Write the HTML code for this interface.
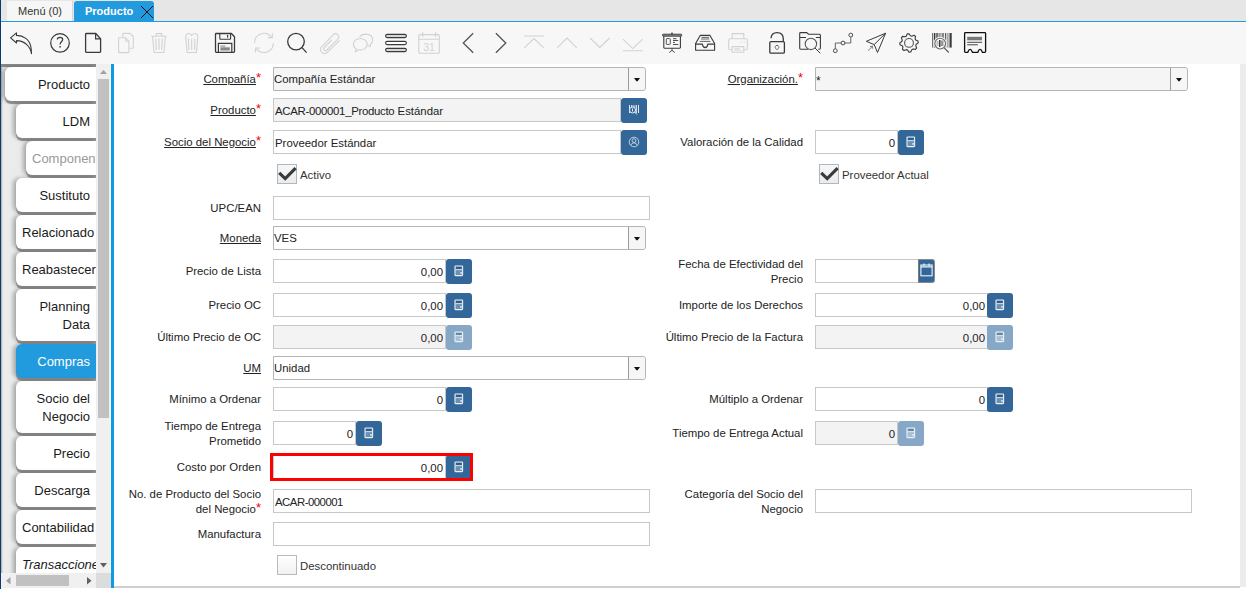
<!DOCTYPE html>
<html><head><meta charset="utf-8"><style>
*{box-sizing:border-box;margin:0;padding:0}
html,body{width:1246px;height:589px;overflow:hidden;background:#fff;font-family:"Liberation Sans",sans-serif;color:#333}
.a{position:absolute}
#tabstrip{left:0;top:0;width:1246px;height:21px;background:#e6e6e6}
#bline{left:0;top:21px;width:1246px;height:1px;background:#229ade}
#tb{left:0;top:22px;width:1246px;height:42px;background:#f7f7f7}
#lborder{left:0;top:0;width:1px;height:589px;background:#0d3a6e}
.lbl{font-size:11.4px;color:#222;text-align:right;white-space:nowrap;line-height:24px;height:24px}
.lbl2{font-size:11.4px;color:#222;text-align:right;line-height:15px}
.u{text-decoration:underline}
.req{color:#f00;font-size:13px;position:relative;top:-1px;line-height:0}
.fld{background:#fff;border:1px solid #c8c8c8;height:24px;font-size:11.4px;line-height:24px;padding:0 0 0 1px;color:#222;white-space:nowrap;overflow:hidden}
.ro{background:#f3f3f3}
.num{text-align:right;padding-right:2px}
.btn{background:#336699;border-radius:3px;height:25px;width:26px}
.btnd{background:#86a8c6}
.cmb{border:1px solid #b4b4b4;border-radius:0 3px 3px 0;height:24px}
.cmbb{border-left:1px solid #9a9a9a;width:17px;height:22px;top:0;background:#f6f6f6;border-radius:0 3px 3px 0}
.chk{width:20px;height:20px;border:1px solid #a9b9c8;background:linear-gradient(#f7f7f7,#ebebeb)}
.tab{background:#fff;border-radius:6px 0 0 6px;font-size:13px;color:#1a1a1a;text-align:right;padding-left:6px;padding-right:6px;box-shadow:0 3px 1px #8a8a8a,-3px 0 4px rgba(0,0,0,.28);overflow:hidden;white-space:nowrap}
</style></head><body>

<div id="tabstrip" class="a"></div>
<div class="a" style="left:7px;top:1px;width:66px;height:20px;background:#f6f6f6;border-right:1px solid #d6d6d6"></div>
<div class="a" style="left:18px;top:1px;height:20px;line-height:21px;font-size:11px;color:#333">Menú (0)</div>
<div class="a" style="left:74px;top:1px;width:80px;height:21px;background:#229ade;border-radius:3px 3px 0 0"></div>
<div class="a" style="left:85px;top:1px;height:20px;line-height:21px;font-size:11px;color:#fff;font-weight:bold">Producto</div>
<svg class="a" style="left:140px;top:5px" width="14" height="14" viewBox="0 0 14 14"><path d="M1 1L13 13M13 1L1 13" stroke="#111" stroke-width="1"/></svg>
<div id="bline" class="a"></div>
<div id="tb" class="a"></div>
<div class="a" style="left:0;top:64px;width:1246px;height:525px;background:#fff"></div>
<div class="a" style="left:114px;top:586px;width:1126px;height:2px;background:#cfcfcf"></div>
<div class="a" style="left:1240px;top:64px;width:6px;height:523px;background:#ececec"></div>
<div class="a" style="left:1px;top:64px;width:95px;height:509px;background:linear-gradient(to right,#a8a8a8 0,#ececec 2px,#e4e4e4 100%);overflow:hidden" id="tabpanel">
<div class="a" style="left:0;top:0;width:95px;height:3px;background:#8a8a8a"></div>
<div class="a tab" style="left:4px;top:3px;height:34px;width:91px;background:#fff;color:#1a1a1a;line-height:34px;padding-top:1px;">Producto</div>
<div class="a tab" style="left:15px;top:40px;height:34px;width:80px;background:#fff;color:#1a1a1a;line-height:34px;padding-top:1px;">LDM</div>
<div class="a tab" style="left:25px;top:77px;height:34px;width:70px;background:#fff;color:#999;line-height:34px;padding-top:1px;">Componentes</div>
<div class="a tab" style="left:15px;top:114px;height:34px;width:80px;background:#fff;color:#1a1a1a;line-height:34px;padding-top:1px;">Sustituto</div>
<div class="a tab" style="left:15px;top:151px;height:34px;width:80px;background:#fff;color:#1a1a1a;line-height:34px;padding-top:1px;">Relacionado</div>
<div class="a tab" style="left:15px;top:188px;height:34px;width:80px;background:#fff;color:#1a1a1a;line-height:34px;padding-top:1px;">Reabastecer</div>
<div class="a tab" style="left:15px;top:225px;height:52px;width:80px;background:#fff;color:#1a1a1a;line-height:18px;padding-top:9px;">Planning<br>Data</div>
<div class="a tab" style="left:15px;top:280px;height:34px;width:80px;background:#229ade;color:#fff;line-height:34px;padding-top:1px;">Compras</div>
<div class="a tab" style="left:15px;top:317px;height:52px;width:80px;background:#fff;color:#1a1a1a;line-height:18px;padding-top:9px;">Socio del<br>Negocio</div>
<div class="a tab" style="left:15px;top:372px;height:34px;width:80px;background:#fff;color:#1a1a1a;line-height:34px;padding-top:1px;">Precio</div>
<div class="a tab" style="left:15px;top:409px;height:34px;width:80px;background:#fff;color:#1a1a1a;line-height:34px;padding-top:1px;">Descarga</div>
<div class="a tab" style="left:15px;top:446px;height:34px;width:80px;background:#fff;color:#1a1a1a;line-height:34px;padding-top:1px;">Contabilidad</div>
<div class="a tab" style="left:15px;top:483px;height:34px;width:80px;background:#fff;color:#1a1a1a;line-height:34px;padding-top:1px;font-style:italic;">Transacciones</div>
</div>
<div class="a" style="left:96px;top:64px;width:14px;height:509px;background:#f0f0f0"></div>
<div class="a" style="left:98px;top:79px;width:11px;height:339px;background:#c1c1c1"></div>
<svg class="a" style="left:100px;top:70px" width="7" height="4"><path d="M0 4L3.5 0L7 4Z" fill="#a0a0a0"/></svg>
<svg class="a" style="left:100px;top:563px" width="7" height="4.5"><path d="M0 0L3.5 4.5L7 0Z" fill="#606060"/></svg>
<div class="a" style="left:1px;top:573px;width:95px;height:15px;background:#f0f0f0"></div>
<div class="a" style="left:16px;top:575px;width:53px;height:11px;background:#c1c1c1"></div>
<svg class="a" style="left:6px;top:577px" width="4.5" height="7.5"><path d="M4.5 0L0 3.75L4.5 7.5Z" fill="#a0a0a0"/></svg>
<svg class="a" style="left:87px;top:577px" width="4.5" height="7.5"><path d="M0 0L4.5 3.75L0 7.5Z" fill="#606060"/></svg>
<div class="a" style="left:96px;top:573px;width:15px;height:15px;background:#dcdcdc"></div>
<div class="a" style="left:111px;top:64px;width:3px;height:524px;background:#0d9ae0"></div>
<div id="lborder" class="a"></div>
<div class="a lbl" style="right:985px;top:67px"><span class="u">Compañía</span><span class="req">*</span></div>
<div class="a cmb" style="left:273px;top:67px;width:373px;background:#f5f5f5"><div class="a" style="left:0px;top:0;line-height:23px;font-size:11.4px;color:#222">Compañía Estándar</div><div class="a cmbb" style="right:0"></div><svg class="a" style="right:5px;top:10px" width="6" height="3.5" viewBox="0 0 6 3.5"><path d="M0 0H6L3.6 3.3H2.4Z" fill="#111"/></svg></div>
<div class="a lbl" style="right:443px;top:67px"><span class="u">Organización.</span><span class="req">*</span></div>
<div class="a cmb" style="left:815px;top:67px;width:373px;background:#f5f5f5"><div class="a" style="left:0px;top:0;line-height:23px;font-size:11.4px;color:#222"><span style="position:relative;top:2px;font-size:12px">*</span></div><div class="a cmbb" style="right:0"></div><svg class="a" style="right:5px;top:10px" width="6" height="3.5" viewBox="0 0 6 3.5"><path d="M0 0H6L3.6 3.3H2.4Z" fill="#111"/></svg></div>
<div class="a lbl" style="right:985px;top:98px"><span class="u">Producto</span><span class="req">*</span></div>
<div class="a fld ro" style="left:273px;top:98px;width:348px;height:24px"><span style='letter-spacing:-0.3px'>ACAR-000001_Producto</span> Estándar</div>
<div class="a btn" style="left:621px;top:98px;width:26px"></div>
<svg class="a" style="left:628px;top:104px" width="12" height="12" viewBox="0 0 12 12"><rect x="1" y="1" width="1" height="8" fill="#e0e8f0"/><rect x="3" y="1" width="1.5" height="8" fill="#c8d4e0"/><rect x="5.5" y="1" width="1" height="8" fill="#e0e8f0"/><rect x="7.5" y="1" width="1.5" height="8" fill="#c8d4e0"/><rect x="10" y="1" width="1" height="8" fill="#e0e8f0"/><circle cx="4.5" cy="6" r="3" fill="#336699" stroke="#e8eef4" stroke-width="1"/><path d="M6.6 8.1L9 10.6" stroke="#e8eef4" stroke-width="1"/><rect x="4" y="4.5" width="1" height="3" fill="#e8eef4"/></svg>
<div class="a lbl" style="right:985px;top:130px"><span class="u">Socio del Negocio</span><span class="req">*</span></div>
<div class="a fld" style="left:273px;top:130px;width:348px;height:24px">Proveedor Estándar</div>
<div class="a btn" style="left:621px;top:130px;width:26px"></div>
<svg class="a" style="left:628px;top:136px" width="12" height="12" viewBox="0 0 12 12"><circle cx="6" cy="6" r="4.8" fill="none" stroke="#c9d6e3" stroke-width="0.9"/><circle cx="6" cy="4.6" r="1.9" fill="none" stroke="#c9d6e3" stroke-width="0.9"/><path d="M2.8 9.4Q3.5 6.8 6 6.8Q8.5 6.8 9.2 9.4" fill="none" stroke="#c9d6e3" stroke-width="0.9"/></svg>
<div class="a lbl" style="right:443px;top:130px">Valoración de la Calidad</div>
<div class="a fld num" style="left:815px;top:130px;width:83px;height:24px">0</div>
<div class="a btn" style="left:898px;top:130px;width:26px"></div>
<svg class="a" style="left:906px;top:136px" width="10" height="12" viewBox="0 0 10 12"><rect x="1" y="1" width="7.6" height="9.6" rx="0.6" fill="rgba(255,255,255,.28)" stroke="#e9eff5" stroke-width="1.1"/><rect x="1.9" y="1.9" width="5.8" height="2" fill="#2b5b8b"/><rect x="1.6" y="4.3" width="6.4" height="0.8" fill="#e9eff5"/><rect x="6.4" y="7" width="1.3" height="1.8" fill="#f4f7fa"/></svg>
<div class="a chk" style="left:277px;top:164px;"></div>
<svg class="a" style="left:277px;top:164px" width="20" height="20" viewBox="0 0 20 20"><path d="M2.2 8.9L8.2 14.6L18.6 4.1" fill="none" stroke="#3a3a3a" stroke-width="3.1"/></svg>
<div class="a" style="left:300px;top:165px;line-height:21px;font-size:11.4px;color:#333">Activo</div>
<div class="a chk" style="left:819px;top:164px;"></div>
<svg class="a" style="left:819px;top:164px" width="20" height="20" viewBox="0 0 20 20"><path d="M2.2 8.9L8.2 14.6L18.6 4.1" fill="none" stroke="#3a3a3a" stroke-width="3.1"/></svg>
<div class="a" style="left:842px;top:165px;line-height:21px;font-size:11.4px;color:#333">Proveedor Actual</div>
<div class="a lbl" style="right:985px;top:196px">UPC/EAN</div>
<div class="a fld" style="left:273px;top:196px;width:377px;height:24px"></div>
<div class="a lbl" style="right:985px;top:226px"><span class="u">Moneda</span></div>
<div class="a cmb" style="left:273px;top:226px;width:373px;background:#fff"><div class="a" style="left:0px;top:0;line-height:23px;font-size:11.4px;color:#222">VES</div><div class="a cmbb" style="right:0"></div><svg class="a" style="right:5px;top:10px" width="6" height="3.5" viewBox="0 0 6 3.5"><path d="M0 0H6L3.6 3.3H2.4Z" fill="#111"/></svg></div>
<div class="a lbl" style="right:985px;top:259px">Precio de Lista</div>
<div class="a fld num" style="left:273px;top:259px;width:173px;height:24px">0,00</div>
<div class="a btn" style="left:446px;top:259px;width:26px"></div>
<svg class="a" style="left:454px;top:265px" width="10" height="12" viewBox="0 0 10 12"><rect x="1" y="1" width="7.6" height="9.6" rx="0.6" fill="rgba(255,255,255,.28)" stroke="#e9eff5" stroke-width="1.1"/><rect x="1.9" y="1.9" width="5.8" height="2" fill="#2b5b8b"/><rect x="1.6" y="4.3" width="6.4" height="0.8" fill="#e9eff5"/><rect x="6.4" y="7" width="1.3" height="1.8" fill="#f4f7fa"/></svg>
<div class="a lbl2" style="right:443px;top:257px;width:200px">Fecha de Efectividad del<br>Precio</div>
<div class="a fld" style="left:815px;top:259px;width:104px;height:24px"></div>
<div class="a" style="left:918px;top:259px;width:17px;height:24px;background:#336699;border:1px solid #8a8a8a;border-left:1px solid #7a7a7a;border-radius:0 3px 3px 0"></div>
<svg class="a" style="left:920px;top:263px" width="13" height="14" viewBox="0 0 13 14"><rect x="0.9" y="2" width="11.2" height="10.8" fill="none" stroke="#f0f4f8" stroke-width="1.1"/><path d="M0.9 3.9H12.1M4 0.5V3M9 0.5V3" stroke="#f0f4f8" stroke-width="1.1"/></svg>
<div class="a lbl" style="right:985px;top:293px">Precio OC</div>
<div class="a fld num" style="left:273px;top:293px;width:173px;height:24px">0,00</div>
<div class="a btn" style="left:446px;top:293px;width:26px"></div>
<svg class="a" style="left:454px;top:299px" width="10" height="12" viewBox="0 0 10 12"><rect x="1" y="1" width="7.6" height="9.6" rx="0.6" fill="rgba(255,255,255,.28)" stroke="#e9eff5" stroke-width="1.1"/><rect x="1.9" y="1.9" width="5.8" height="2" fill="#2b5b8b"/><rect x="1.6" y="4.3" width="6.4" height="0.8" fill="#e9eff5"/><rect x="6.4" y="7" width="1.3" height="1.8" fill="#f4f7fa"/></svg>
<div class="a lbl" style="right:443px;top:293px">Importe de los Derechos</div>
<div class="a fld num" style="left:815px;top:293px;width:173px;height:24px">0,00</div>
<div class="a btn" style="left:987px;top:293px;width:26px"></div>
<svg class="a" style="left:995px;top:299px" width="10" height="12" viewBox="0 0 10 12"><rect x="1" y="1" width="7.6" height="9.6" rx="0.6" fill="rgba(255,255,255,.28)" stroke="#e9eff5" stroke-width="1.1"/><rect x="1.9" y="1.9" width="5.8" height="2" fill="#2b5b8b"/><rect x="1.6" y="4.3" width="6.4" height="0.8" fill="#e9eff5"/><rect x="6.4" y="7" width="1.3" height="1.8" fill="#f4f7fa"/></svg>
<div class="a lbl" style="right:985px;top:325px">Último Precio de OC</div>
<div class="a fld ro num" style="left:273px;top:325px;width:173px;height:24px">0,00</div>
<div class="a btn btnd" style="left:446px;top:325px;width:26px"></div>
<svg class="a" style="left:454px;top:331px" width="10" height="12" viewBox="0 0 10 12"><rect x="1" y="1" width="7.6" height="9.6" rx="0.6" fill="rgba(255,255,255,.28)" stroke="#e9eff5" stroke-width="1.1"/><rect x="1.9" y="1.9" width="5.8" height="2" fill="#5d83a8"/><rect x="1.6" y="4.3" width="6.4" height="0.8" fill="#e9eff5"/><rect x="6.4" y="7" width="1.3" height="1.8" fill="#f4f7fa"/></svg>
<div class="a lbl" style="right:443px;top:325px">Último Precio de la Factura</div>
<div class="a fld ro num" style="left:815px;top:325px;width:173px;height:24px">0,00</div>
<div class="a btn btnd" style="left:987px;top:325px;width:26px"></div>
<svg class="a" style="left:995px;top:331px" width="10" height="12" viewBox="0 0 10 12"><rect x="1" y="1" width="7.6" height="9.6" rx="0.6" fill="rgba(255,255,255,.28)" stroke="#e9eff5" stroke-width="1.1"/><rect x="1.9" y="1.9" width="5.8" height="2" fill="#5d83a8"/><rect x="1.6" y="4.3" width="6.4" height="0.8" fill="#e9eff5"/><rect x="6.4" y="7" width="1.3" height="1.8" fill="#f4f7fa"/></svg>
<div class="a lbl" style="right:985px;top:356px"><span class="u">UM</span></div>
<div class="a cmb" style="left:273px;top:356px;width:373px;background:#fff"><div class="a" style="left:0px;top:0;line-height:23px;font-size:11.4px;color:#222">Unidad</div><div class="a cmbb" style="right:0"></div><svg class="a" style="right:5px;top:10px" width="6" height="3.5" viewBox="0 0 6 3.5"><path d="M0 0H6L3.6 3.3H2.4Z" fill="#111"/></svg></div>
<div class="a lbl" style="right:985px;top:387px">Mínimo a Ordenar</div>
<div class="a fld num" style="left:273px;top:387px;width:173px;height:24px">0</div>
<div class="a btn" style="left:446px;top:387px;width:26px"></div>
<svg class="a" style="left:454px;top:393px" width="10" height="12" viewBox="0 0 10 12"><rect x="1" y="1" width="7.6" height="9.6" rx="0.6" fill="rgba(255,255,255,.28)" stroke="#e9eff5" stroke-width="1.1"/><rect x="1.9" y="1.9" width="5.8" height="2" fill="#2b5b8b"/><rect x="1.6" y="4.3" width="6.4" height="0.8" fill="#e9eff5"/><rect x="6.4" y="7" width="1.3" height="1.8" fill="#f4f7fa"/></svg>
<div class="a lbl" style="right:443px;top:387px">Múltiplo a Ordenar</div>
<div class="a fld num" style="left:815px;top:387px;width:173px;height:24px">0</div>
<div class="a btn" style="left:987px;top:387px;width:26px"></div>
<svg class="a" style="left:995px;top:393px" width="10" height="12" viewBox="0 0 10 12"><rect x="1" y="1" width="7.6" height="9.6" rx="0.6" fill="rgba(255,255,255,.28)" stroke="#e9eff5" stroke-width="1.1"/><rect x="1.9" y="1.9" width="5.8" height="2" fill="#2b5b8b"/><rect x="1.6" y="4.3" width="6.4" height="0.8" fill="#e9eff5"/><rect x="6.4" y="7" width="1.3" height="1.8" fill="#f4f7fa"/></svg>
<div class="a lbl2" style="right:985px;top:419px;width:200px">Tiempo de Entrega<br>Prometido</div>
<div class="a fld num" style="left:273px;top:421px;width:83px;height:24px">0</div>
<div class="a btn" style="left:356px;top:421px;width:26px"></div>
<svg class="a" style="left:364px;top:427px" width="10" height="12" viewBox="0 0 10 12"><rect x="1" y="1" width="7.6" height="9.6" rx="0.6" fill="rgba(255,255,255,.28)" stroke="#e9eff5" stroke-width="1.1"/><rect x="1.9" y="1.9" width="5.8" height="2" fill="#2b5b8b"/><rect x="1.6" y="4.3" width="6.4" height="0.8" fill="#e9eff5"/><rect x="6.4" y="7" width="1.3" height="1.8" fill="#f4f7fa"/></svg>
<div class="a lbl" style="right:443px;top:421px">Tiempo de Entrega Actual</div>
<div class="a fld ro num" style="left:815px;top:421px;width:83px;height:24px">0</div>
<div class="a btn btnd" style="left:898px;top:421px;width:26px"></div>
<svg class="a" style="left:906px;top:427px" width="10" height="12" viewBox="0 0 10 12"><rect x="1" y="1" width="7.6" height="9.6" rx="0.6" fill="rgba(255,255,255,.28)" stroke="#e9eff5" stroke-width="1.1"/><rect x="1.9" y="1.9" width="5.8" height="2" fill="#5d83a8"/><rect x="1.6" y="4.3" width="6.4" height="0.8" fill="#e9eff5"/><rect x="6.4" y="7" width="1.3" height="1.8" fill="#f4f7fa"/></svg>
<div class="a lbl" style="right:985px;top:455px">Costo por Orden</div>
<div class="a fld num" style="left:273px;top:455px;width:173px;height:24px">0,00</div>
<div class="a btn" style="left:446px;top:455px;width:26px"></div>
<svg class="a" style="left:454px;top:461px" width="10" height="12" viewBox="0 0 10 12"><rect x="1" y="1" width="7.6" height="9.6" rx="0.6" fill="rgba(255,255,255,.28)" stroke="#e9eff5" stroke-width="1.1"/><rect x="1.9" y="1.9" width="5.8" height="2" fill="#2b5b8b"/><rect x="1.6" y="4.3" width="6.4" height="0.8" fill="#e9eff5"/><rect x="6.4" y="7" width="1.3" height="1.8" fill="#f4f7fa"/></svg>
<div class="a" style="left:270px;top:453px;width:203px;height:28px;border:3px solid #f00"></div>
<div class="a lbl2" style="right:985px;top:487px;width:200px">No. de Producto del Socio<br>del Negocio<span class="req">*</span></div>
<div class="a fld" style="left:273px;top:489px;width:377px;height:24px"><span style='letter-spacing:-0.5px'>ACAR-000001</span></div>
<div class="a lbl2" style="right:443px;top:487px;width:200px">Categoría del Socio del<br>Negocio</div>
<div class="a fld" style="left:815px;top:489px;width:377px;height:24px"></div>
<div class="a lbl" style="right:985px;top:522px">Manufactura</div>
<div class="a fld" style="left:273px;top:522px;width:377px;height:24px"></div>
<div class="a chk" style="left:277px;top:555px;border-color:#bababa;background:linear-gradient(#fff,#f1f1f1)"></div>
<div class="a" style="left:300px;top:556px;line-height:21px;font-size:11.4px;color:#333">Descontinuado</div>
<svg class="a" style="left:0;top:0" width="1246" height="64" viewBox="0 0 1246 64">
<path d="M10.6 37.8L16.5 32.8V35.4C23.5 35.6 29.5 39.5 30.8 46.5C31.3 49 31.5 51.5 31.5 53.6C30.5 47 25 40.6 16.5 40.6V43Z" fill="none" stroke="#3a3a3a" stroke-width="1.1" stroke-linejoin="round"/>
<circle cx="60" cy="42.9" r="9.3" fill="none" stroke="#3a3a3a" stroke-width="1.2"/>
<path d="M57.3 39.6C57.3 37.9 58.5 37.3 60 37.3C61.6 37.3 62.7 38.2 62.7 39.5C62.7 41.4 60.1 41.8 60.1 44.6" fill="none" stroke="#3a3a3a" stroke-width="1.2"/>
<rect x="59.4" y="46" width="1.4" height="1.6" fill="#3a3a3a"/>
<path d="M86.5 33.5H95.7L100.6 38.7V51.5Q100.6 52.3 99.8 52.3H86.3Q85.6 52.3 85.6 51.5V34.3Q85.6 33.5 86.5 33.5Z" fill="none" stroke="#3a3a3a" stroke-width="1.3"/>
<path d="M95.6 33.6V38.8H100.5" fill="none" stroke="#3a3a3a" stroke-width="1.2"/>
<path d="M122.8 37V34.2Q122.8 33.4 123.6 33.4H130L133.3 36.8V47.5Q133.3 48.2 132.5 48.2H129.4" fill="none" stroke="#d2d2d2" stroke-width="1.1"/>
<path d="M119.3 37.7H125.6L128.9 41.2V51.9Q128.9 52.6 128.1 52.6H119.3Q118.6 52.6 118.6 51.9V38.4Q118.6 37.7 119.3 37.7Z" fill="none" stroke="#d2d2d2" stroke-width="1.1"/>
<path d="M125.6 37.8V41.2H128.8" fill="none" stroke="#d2d2d2" stroke-width="1"/>
<path d="M151.2 36.3H166.7M156.3 36.2V33.6H161.7V36.2M152.6 36.5L154 51.8Q154.1 52.5 154.8 52.5H163.2Q163.9 52.5 164 51.8L165.3 36.5M155.8 38.6L156.3 50M159 38.6V50M162.2 38.6L161.7 50" fill="none" stroke="#d2d2d2" stroke-width="1.1"/>
<path d="M185.6 36.3L187 51.8Q187.1 52.5 187.8 52.5H195.7Q196.4 52.5 196.5 51.8L197.9 36.3Q197 33.3 194.7 33.5Q192.8 33.7 191.7 35.5Q190.6 33.5 188.7 33.5Q186.5 33.5 185.6 36.3ZM188.4 38.6L188.8 50M191.7 38.6V50M194.9 38.6L194.6 50" fill="none" stroke="#d2d2d2" stroke-width="1.1"/>
<path d="M216.2 33.5H231.4L234.5 36.7V51.6Q234.5 52.4 233.7 52.4H216.2Q215.5 52.4 215.5 51.6V34.3Q215.5 33.5 216.2 33.5Z" fill="none" stroke="#3a3a3a" stroke-width="1.3"/>
<path d="M219.8 33.6V38.6Q219.8 39.3 220.5 39.3H229.9Q230.6 39.3 230.6 38.6V33.6" fill="none" stroke="#3a3a3a" stroke-width="1.1"/>
<rect x="227" y="35" width="1.2" height="2.6" fill="#3a3a3a"/>
<path d="M218.4 52.3V43.4H231.8V52.3" fill="none" stroke="#3a3a3a" stroke-width="1.2"/>
<rect x="220.4" y="45.6" width="5" height="0.9" fill="#777"/><rect x="220.4" y="47.3" width="9.4" height="3.2" fill="#888"/>
<path d="M254.6 43A9.3 9.3 0 0 1 271.4 37.2M273.3 43A9.3 9.3 0 0 1 256.5 48.6" fill="none" stroke="#d2d2d2" stroke-width="1.1"/>
<path d="M272.3 33.2V37.6H267.8M255.6 52.4V48H260" fill="none" stroke="#d2d2d2" stroke-width="1.1"/>
<circle cx="296" cy="41.6" r="8.3" fill="none" stroke="#3a3a3a" stroke-width="1.3"/>
<path d="M302 47.6L306.6 52.6" stroke="#3a3a3a" stroke-width="1.3"/>
<path d="M339.9 44.4L329 55.3" fill="none" stroke="#d2d2d2" stroke-width="0"/>
<path d="M339.8 40.3L327.5 52.2Q324.5 55 321.6 52.2Q319 49.4 321.8 46.6L333.2 34.8Q335.5 32.5 337.8 34.8Q340 37 337.7 39.3L326.8 50Q325.4 51.4 324.1 50.2Q322.9 48.9 324.3 47.5L331.8 39.8" fill="none" stroke="#d2d2d2" stroke-width="1.1"/>
<ellipse cx="360.3" cy="44.3" rx="6.9" ry="5.8" fill="#f7f7f7" stroke="#d2d2d2" stroke-width="1.1"/>
<path d="M356 48.7L355.4 51.8L358.7 50" fill="#f7f7f7" stroke="#d2d2d2" stroke-width="1.1"/>
<path d="M359.6 37.1Q361.5 34.1 366 34.1Q372.6 34.3 372.6 40Q372.6 43 370.3 44.5L370.3 46.5L367.4 45.2" fill="none" stroke="#d2d2d2" stroke-width="1.1"/>
<rect x="385.6" y="34.4" width="20.8" height="3.2" rx="1.6" fill="#d6d6d6" stroke="#3a3a3a" stroke-width="1.1"/>
<rect x="385.6" y="41.4" width="20.8" height="3.2" rx="1.6" fill="#fff" stroke="#3a3a3a" stroke-width="1.1"/>
<rect x="385.6" y="48.4" width="20.8" height="3.2" rx="1.6" fill="#d6d6d6" stroke="#3a3a3a" stroke-width="1.1"/>
<rect x="418.8" y="34.6" width="20.5" height="18.6" rx="1" fill="none" stroke="#d2d2d2" stroke-width="1.1"/>
<path d="M418.8 39.3H439.3M422.6 32.3V37M435.6 32.3V37" fill="none" stroke="#d2d2d2" stroke-width="1.1"/>
<text x="429" y="50.6" font-family="Liberation Sans" font-size="10.5" fill="#d2d2d2" text-anchor="middle">31</text>
<path d="M473.2 33.3L463.3 43L473.2 52.8M495.9 33.3L505.8 43L495.9 52.8" fill="none" stroke="#555" stroke-width="1.3"/>
<path d="M524 36H544M524.2 47.8L534 38.5L543.8 47.8M557.2 47.8L567 38L576.8 47.8M590 38L599.8 47.5L609.6 38M623 39.2L632.8 48.6L642.6 39.2M623 50.8H642.8" fill="none" stroke="#d2d2d2" stroke-width="1.1"/>
<rect x="662.6" y="34.2" width="19" height="2" rx="0.5" fill="#888" stroke="#3a3a3a" stroke-width="0.9"/>
<circle cx="672" cy="33.5" r="0.9" fill="#3a3a3a"/>
<path d="M663.8 36.3V47.6Q663.8 48.2 664.4 48.2H679.8Q680.4 48.2 680.4 47.6V36.3" fill="none" stroke="#3a3a3a" stroke-width="1.1"/>
<rect x="666.3" y="38.6" width="4" height="5.8" rx="0.6" fill="none" stroke="#555" stroke-width="1"/>
<path d="M673 38.7H676.5M673 40.5H678.2M673 42.4H675M673 44.5H678.3M672 48.3V50.3L669.3 52.6M672 50.3L674.8 52.6" fill="none" stroke="#3a3a3a" stroke-width="0.9"/>
<path d="M700.2 35.4H710L714.6 43.6V50.3H695.6V43.6Z" fill="none" stroke="#3a3a3a" stroke-width="1.1" stroke-linejoin="round"/>
<path d="M695.6 44.1H702.3Q703 47.6 705.1 47.6Q707.3 47.6 707.9 44.1H714.6" fill="none" stroke="#3a3a3a" stroke-width="1.1"/>
<path d="M701.5 37.4H709M701 39H709.3M699.8 41.4H710.4" fill="none" stroke="#555" stroke-width="0.9"/>
<path d="M732.2 38.4V33.6H743.8V38.4M732 49.7H729.8Q728.7 49.7 728.7 48.6V40.3Q728.7 38.8 730.2 38.8H745.8Q747.3 38.8 747.3 40.3V48.6Q747.3 49.7 746.2 49.7H744M732.2 46.6H743.8V52.2H732.2Z" fill="none" stroke="#d2d2d2" stroke-width="1.1"/>
<path d="M740.5 42.1H742M743.4 42.1H744.9M734.3 48.7H739.5M734.3 50.2H741.6" fill="none" stroke="#d2d2d2" stroke-width="0.9"/>
<path d="M771 38.2Q771.5 32.6 777 32.6Q783.3 32.6 783.3 39V41.4" fill="none" stroke="#3a3a3a" stroke-width="1.3"/>
<rect x="769.8" y="41.6" width="14.6" height="11.6" rx="1.2" fill="none" stroke="#3a3a3a" stroke-width="1.3"/>
<path d="M777 45.3A1.9 1.9 0 0 1 778.2 48.6L777 49.8L775.8 48.6A1.9 1.9 0 0 1 777 45.3Z" fill="none" stroke="#555" stroke-width="0.9"/>
<path d="M808.3 49.2H800.6Q799.7 49.2 799.7 48.3V33.5Q799.7 32.6 800.6 32.6H806.7L808.5 34.2H819.4Q820.4 34.2 820.4 35.2V48.3Q820.4 49.2 819.4 49.2H818.3M799.8 37.5H806M815.8 37.5H820.4" fill="none" stroke="#3a3a3a" stroke-width="1.1"/>
<circle cx="810.9" cy="43.9" r="5.7" fill="none" stroke="#555" stroke-width="1.1"/>
<path d="M815 48L820.3 53.3" stroke="#3a3a3a" stroke-width="1"/>
<path d="M835.3 48.5V43H841M845 43H850.8V37.3" fill="none" stroke="#555" stroke-width="0.9"/>
<circle cx="835.3" cy="50.7" r="1.9" fill="none" stroke="#3a3a3a" stroke-width="0.9"/>
<circle cx="843" cy="43" r="1.9" fill="none" stroke="#3a3a3a" stroke-width="0.9"/>
<circle cx="850.8" cy="35.1" r="1.9" fill="none" stroke="#3a3a3a" stroke-width="0.9"/>
<path d="M866.3 41.3L885.6 33.2L877.5 52.5L874.2 44.6Z M874.2 44.6L885.6 33.2" fill="none" stroke="#3a3a3a" stroke-width="1" stroke-linejoin="round"/>
<path d="M868 50.7L872.6 46.2M870 46.6L872.6 46.2L872.3 48.8" fill="none" stroke="#666" stroke-width="0.8"/>
<path d="M909.00 33.70 L910.42 35.74 L911.79 36.16 L914.11 35.25 L915.51 36.39 L915.07 38.84 L915.74 40.11 L918.02 41.11 L918.20 42.90 L916.16 44.32 L915.74 45.69 L916.65 48.01 L915.51 49.41 L913.06 48.97 L911.79 49.64 L910.79 51.92 L909.00 52.10 L907.58 50.06 L906.21 49.64 L903.89 50.55 L902.49 49.41 L902.93 46.96 L902.26 45.69 L899.98 44.69 L899.80 42.90 L901.84 41.48 L902.26 40.11 L901.35 37.79 L902.49 36.39 L904.94 36.83 L906.21 36.16 L907.21 33.88Z" fill="none" stroke="#3a3a3a" stroke-width="1.1" stroke-linejoin="round"/>
<circle cx="909" cy="42.9" r="4.4" fill="none" stroke="#555" stroke-width="1.1"/>
<rect x="932.3" y="33" width="0.9" height="14.6" fill="#3a3a3a"/>
<rect x="934" y="33" width="1.4" height="14.6" fill="#3a3a3a"/>
<rect x="936" y="33" width="2.5" height="14.6" fill="#777"/>
<rect x="939.5" y="33" width="0.9" height="14.6" fill="#3a3a3a"/>
<rect x="941.5" y="33" width="2.6" height="14.6" fill="#888"/>
<rect x="945.2" y="33" width="1.0" height="14.6" fill="#3a3a3a"/>
<rect x="947.2" y="33" width="1.4" height="14.6" fill="#999"/>
<rect x="949.5" y="33" width="2.2" height="14.6" fill="#3a3a3a"/>
<circle cx="940.2" cy="43.6" r="5.9" fill="#f7f7f7" stroke="#f7f7f7" stroke-width="1.8"/>
<circle cx="940.2" cy="43.6" r="5.4" fill="none" stroke="#666" stroke-width="1.1"/>
<rect x="939" y="40" width="1.5" height="7" fill="#3a3a3a"/><rect x="941" y="40.5" width="2.5" height="5.5" fill="#999"/><rect x="936.5" y="41" width="2" height="5" fill="#bbb"/>
<path d="M944.2 47.8L948.8 52.5" stroke="#555" stroke-width="1.1"/>
<path d="M965.4 32.6H984.8Q985.6 32.6 985.6 33.4V51.6Q985.6 52.3 984.8 52.3H982.4Q981.3 49.4 980.1 49.4Q978.8 49.4 977.8 52.3H972.4Q971.3 49.4 970.1 49.4Q968.8 49.4 967.8 52.3H965.4Q964.6 52.3 964.6 51.6V33.4Q964.6 32.6 965.4 32.6Z" fill="none" stroke="#111" stroke-width="1.3"/>
<rect x="967.2" y="36.8" width="14.8" height="3.5" fill="#777"/><path d="M967.2 42.3H982M967.2 44.8H977.8" fill="none" stroke="#333" stroke-width="0.9"/>
</svg>
</body></html>
